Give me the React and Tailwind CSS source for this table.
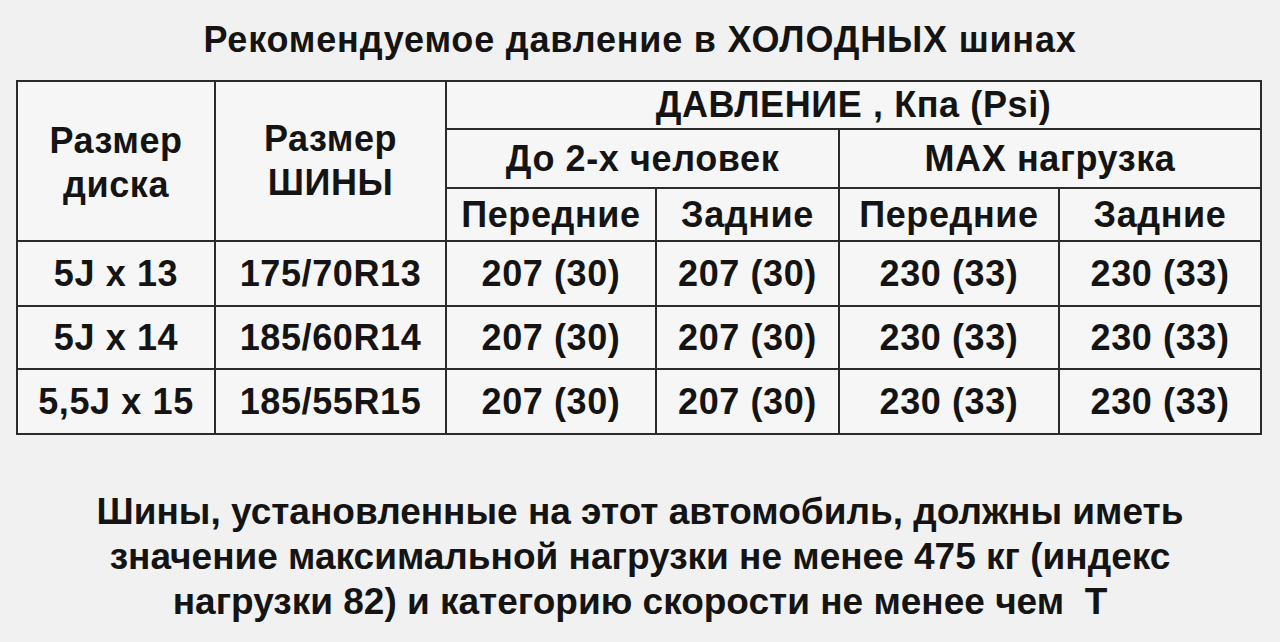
import React from "react";

const rows = [
  ["5J x 13", "175/70R13", "207 (30)", "207 (30)", "230 (33)", "230 (33)"],
  ["5J x 14", "185/60R14", "207 (30)", "207 (30)", "230 (33)", "230 (33)"],
  ["5,5J x 15", "185/55R15", "207 (30)", "207 (30)", "230 (33)", "230 (33)"],
];

const cell = "border-2 border-[#2b2b2b] text-center align-middle p-0 whitespace-nowrap";

export default function App() {
  return (
    <div
      className="w-[1280px] h-[642px] bg-[#f1f1f1] text-[#141414] font-bold overflow-hidden"
      style={{ fontFamily: "'Liberation Sans', Arial, sans-serif" }}
    >
      {/* Заголовок */}
      <h1 className="h-[80px] pt-[17px] text-center text-[36px] leading-[46px] tracking-[0.8px]">
        Рекомендуемое давление в ХОЛОДНЫХ шинах
      </h1>

      {/* Таблица */}
      <div className="pl-[16px]">
        <table className="w-[1244px] border-collapse bg-[#f6f6f6] text-[36px] leading-[44px] tracking-[0.6px] table-fixed">
          <colgroup>
            <col className="w-[198px]" />
            <col className="w-[231px]" />
            <col className="w-[210px]" />
            <col className="w-[183px]" />
            <col className="w-[220px]" />
            <col className="w-[202px]" />
          </colgroup>
          <tbody>
            <tr className="h-[48px]">
              <td rowSpan={3} className={cell}>
                <div className="pt-[4px]">Размер</div>
                <div>диска</div>
              </td>
              <td rowSpan={3} className={cell}>
                <div>Размер</div>
                <div>ШИНЫ</div>
              </td>
              <td colSpan={4} className={cell}>
                ДАВЛЕНИЕ , Кпа (Psi)
              </td>
            </tr>
            <tr className="h-[59px]">
              <td colSpan={2} className={cell}>
                До 2-х человек
              </td>
              <td colSpan={2} className={cell}>
                MAX нагрузка
              </td>
            </tr>
            <tr className="h-[53px]">
              <td className={cell}>Передние</td>
              <td className={cell}>Задние</td>
              <td className={cell}>Передние</td>
              <td className={cell}>Задние</td>
            </tr>
            {rows.map((r, i) => (
              <tr key={i} className={i === 1 ? "h-[63px]" : "h-[65px]"}>
                {r.map((v, j) => (
                  <td key={j} className={cell}>
                    {v}
                  </td>
                ))}
              </tr>
            ))}
          </tbody>
        </table>
      </div>

      {/* Примечание */}
      <div className="mt-[54px] text-center text-[37px] leading-[45px]">
        <p>Шины, установленные на этот автомобиль, должны иметь</p>
        <p>значение максимальной нагрузки не менее 475 кг (индекс</p>
        <p>нагрузки 82) и категорию скорости не менее чем&nbsp; Т</p>
      </div>
    </div>
  );
}
